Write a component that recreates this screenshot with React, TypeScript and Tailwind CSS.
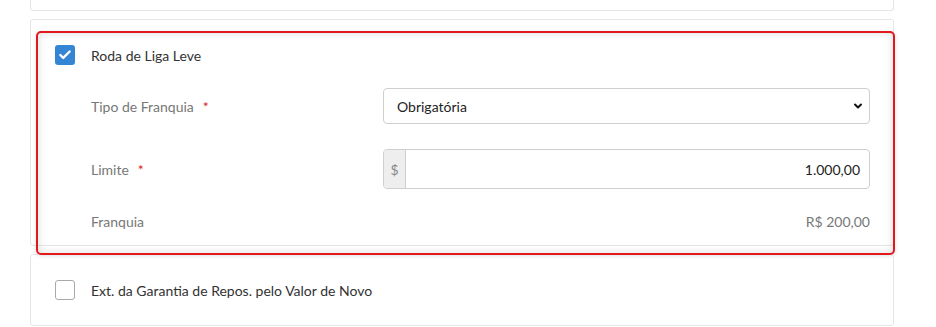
import { Check, ChevronDown } from "lucide-react";

const labelFont = "font-['Lato',_'Open_Sans',_sans-serif]";

function Box({ checked }: { checked?: boolean }) {
  if (checked) {
    return (
      <span className="w-5 h-5 rounded-[3px] bg-[#3485d4] flex items-center justify-center shrink-0">
        <Check size={14} strokeWidth={4} className="text-white" />
      </span>
    );
  }
  return <span className="w-5 h-5 rounded-[3px] border border-[#a9a9a9] bg-white shrink-0" />;
}

function Label({ text, required }: { text: string; required?: boolean }) {
  return (
    <span className="text-[14px] text-[#777]">
      {text}
      {required && <span className="text-[#d9251e] ml-[9px]">*</span>}
    </span>
  );
}

export default function App() {
  return (
    <div className={`w-[936px] h-[327px] bg-white overflow-hidden ${labelFont}`}>
      <div className="ml-[30px] w-[864px] flex flex-col">
        <div className="h-[11px] border border-t-0 border-[#e6e6e6] rounded-b-[3px]" />

        <div className="relative mt-[8px] h-[227px] border border-[#e6e6e6] rounded-[3px] pl-[24px] pr-[23px] pt-[25px]">
          <div className="flex items-center h-5 gap-4">
            <Box checked />
            <span className="text-[14px] text-[#333]">Roda de Liga Leve</span>
          </div>

          <div className="pl-[36px] flex flex-col">
            <div className="mt-[23px] flex items-center h-9">
              <div className="w-[292px]">
                <Label text="Tipo de Franquia" required />
              </div>
              <div className="flex-1 h-9 relative">
                <select
                  defaultValue="Obrigatória"
                  className="appearance-none w-full h-9 border border-[#cfcfcf] rounded-[4px] bg-white pl-[13px] text-[14px] text-[#222] outline-none"
                >
                  <option>Obrigatória</option>
                  <option>Opcional</option>
                </select>
                <ChevronDown
                  size={12}
                  strokeWidth={4}
                  className="absolute right-[6px] top-[12px] text-[#111] pointer-events-none"
                />
              </div>
            </div>

            <div className="mt-[25px] flex items-center h-10">
              <div className="w-[292px]">
                <Label text="Limite" required />
              </div>
              <div className="flex-1 h-10 flex border border-[#cfcfcf] rounded-[4px] overflow-hidden">
                <span className="w-[22px] bg-[#eeeeee] border-r border-[#cfcfcf] flex items-center justify-center text-[14px] text-[#888]">
                  $
                </span>
                <span className="flex-1 flex items-center justify-end pr-[9px] text-[14px] text-[#222]">1.000,00</span>
              </div>
            </div>

            <div className="mt-[22px] flex items-center justify-between h-5">
              <Label text="Franquia" />
              <span className="text-[14px] text-[#777]">R$ 200,00</span>
            </div>
          </div>

          <div className="absolute left-[5px] top-[11px] right-[-2px] bottom-[-10px] border-2 border-[#e2181d] rounded-[5px] shadow-[inset_0_0_8px_rgba(0,0,0,0.14),0_1px_4px_rgba(0,0,0,0.12)] pointer-events-none" />
        </div>

        <div className="mt-[8px] h-[72px] border border-[#e6e6e6] rounded-[3px] pl-[24px] flex items-center gap-4">
          <Box />
          <span className="text-[14px] text-[#333]">Ext. da Garantia de Repos. pelo Valor de Novo</span>
        </div>
      </div>
    </div>
  );
}
